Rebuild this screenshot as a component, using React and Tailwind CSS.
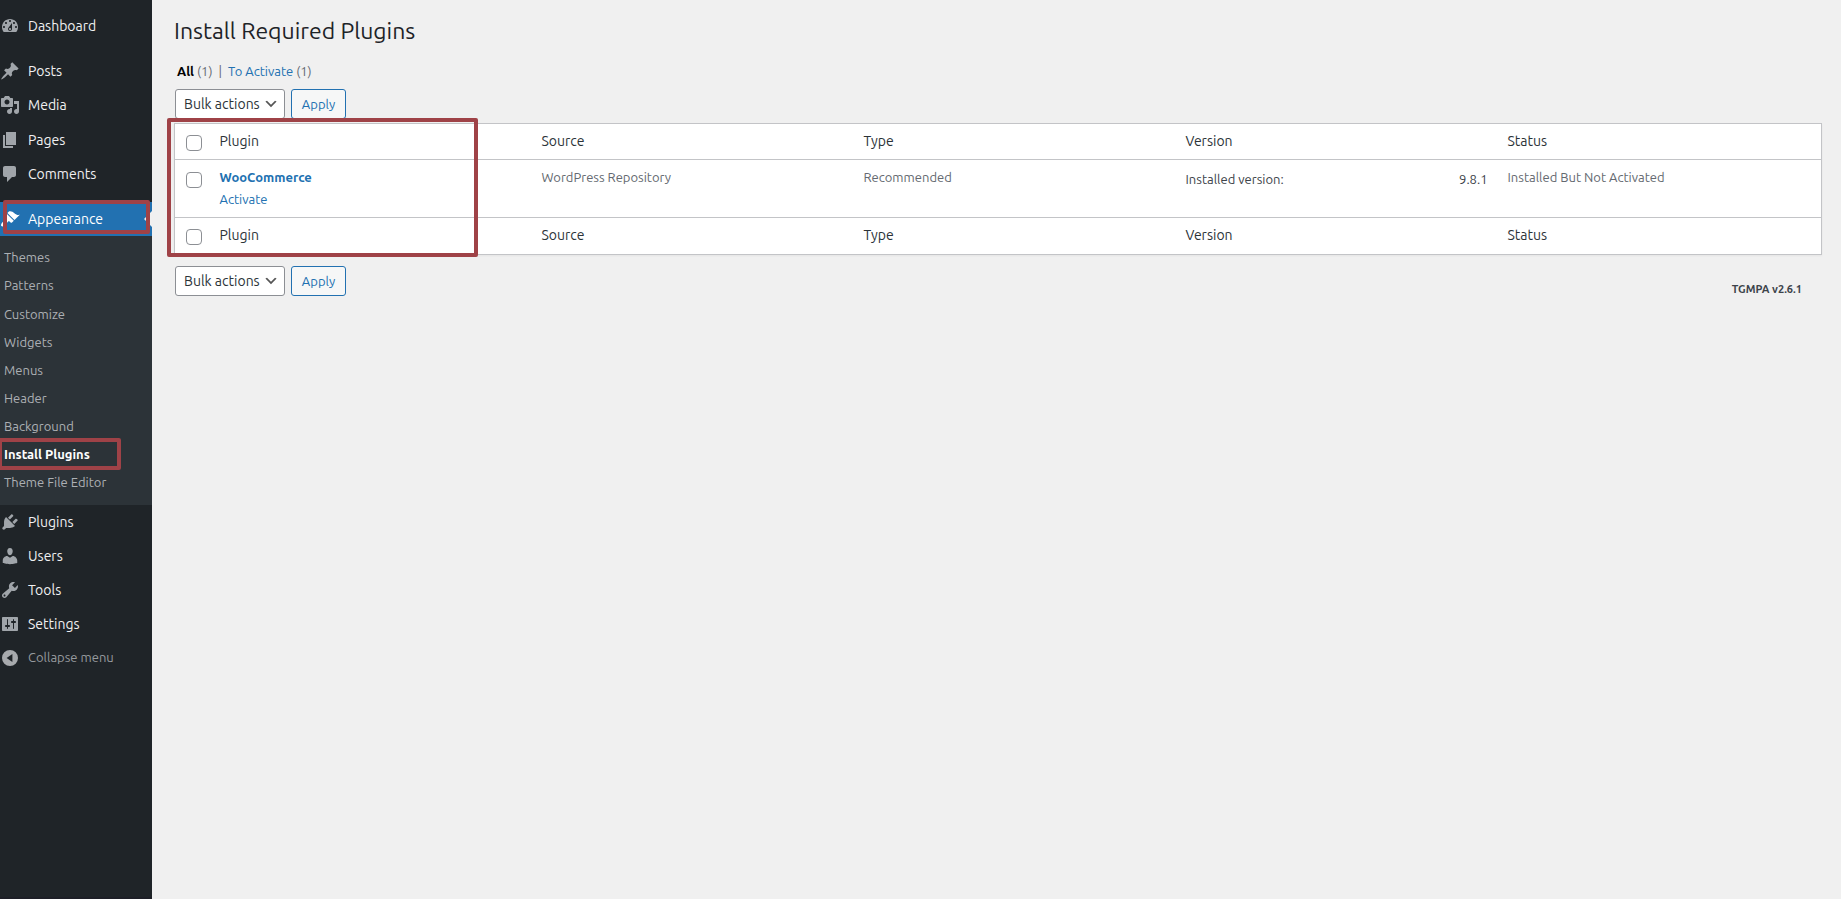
import React, { useState } from 'react';

const icons = {
  dashboard: 'M3.76 16h12.48c1.1-1.37 1.76-3.11 1.76-5 0-4.42-3.58-8-8-8s-8 3.58-8 8c0 1.89.66 3.63 1.76 5zM10 4c.55 0 1 .45 1 1s-.45 1-1 1-1-.45-1-1 .45-1 1-1zM6 6c.55 0 1 .45 1 1s-.45 1-1 1-1-.45-1-1 .45-1 1-1zm8 0c.55 0 1 .45 1 1s-.45 1-1 1-1-.45-1-1 .45-1 1-1zm-5.37 5.55L12 7v6c0 1.1-.9 2-2 2s-2-.9-2-2c0-.57.24-1.08.63-1.45zM4 10c.55 0 1 .45 1 1s-.45 1-1 1-1-.45-1-1 .45-1 1-1zm12 0c.55 0 1 .45 1 1s-.45 1-1 1-1-.45-1-1 .45-1 1-1zm-5 3c0-.55-.45-1-1-1s-1 .45-1 1 .45 1 1 1 1-.45 1-1z',
  posts: 'M10.44 3.02l1.82-1.82 6.36 6.35-1.83 1.82c-1.05-.68-2.48-.57-3.41.36l-.75.75c-.92.93-1.04 2.35-.35 3.41l-1.83 1.82-2.41-2.41-2.8 2.79c-.42.42-3.38 2.71-3.8 2.29s1.86-3.39 2.28-3.81l2.79-2.79L4.1 9.36l1.83-1.82c1.05.69 2.48.57 3.4-.36l.75-.75c.93-.92 1.05-2.35.36-3.41z',
  media: 'M13 11V4c0-.55-.45-1-1-1h-1.67L9 1H5L3.67 3H2c-.55 0-1 .45-1 1v7c0 .55.45 1 1 1h10c.55 0 1-.45 1-1zM7 4.5c1.38 0 2.5 1.12 2.5 2.5S8.38 9.5 7 9.5 4.5 8.38 4.5 7 5.62 4.5 7 4.5zM14 6h5v10.5c0 1.38-1.12 2.5-2.5 2.5S14 17.88 14 16.5s1.12-2.5 2.5-2.5c.17 0 .34.02.5.05V9h-3V6zm-4 8.05V13h2v3.5c0 1.38-1.12 2.5-2.5 2.5S7 17.88 7 16.5 8.12 14 9.5 14c.17 0 .34.02.5.05z',
  pages: 'M6 15V2h10v13H6zm-1 1h8v2H3V5h2v11z',
  comments: 'M5 2h9c1.1 0 2 .9 2 2v7c0 1.1-.9 2-2 2h-2l-5 5v-5H5c-1.1 0-2-.9-2-2V4c0-1.1.9-2 2-2z',
  appearance: 'M14.48 11.06L7.41 3.99l1.5-1.5c.5-.56 2.3-.47 3.51.32 1.21.8 1.43 1.28 2.91 2.1 1.18.64 2.45 1.26 4.45.85zm-.71.71L6.7 4.7 4.93 6.47c-.39.39-.39 1.02 0 1.41l1.06 1.06c.39.39.39 1.03 0 1.42-.6.6-1.43 1.11-2.21 1.69-.35.26-.7.53-1.01.84C1.43 14.23.4 16.08 1.4 17.07c.99 1 2.84-.03 4.18-1.36.31-.31.58-.66.85-1.02.57-.78 1.08-1.61 1.69-2.21.39-.39 1.02-.39 1.41 0l1.06 1.06c.39.39 1.02.39 1.41 0z',
  plugins: 'M13.11 4.36L9.87 7.6 8 5.73l3.24-3.24c.35-.34 1.05-.2 1.56.32.52.51.66 1.21.31 1.55zm-8 1.77l.91-1.12 9.01 9.01-1.19.84c-.71.71-2.63 1.16-3.82 1.16H6.14L4.9 17.26c-.59.59-1.54.59-2.12 0-.59-.58-.59-1.53 0-2.12l1.24-1.24v-3.88c0-1.13.4-3.19 1.09-3.89zm7.26 3.97l3.24-3.24c.34-.35 1.04-.21 1.55.31.52.51.66 1.21.31 1.55l-3.24 3.25z',
  users: 'M10 9.25c-2.27 0-2.73-3.44-2.73-3.44C7 4.02 7.82 2 9.97 2c2.16 0 2.98 2.02 2.71 3.81 0 0-.41 3.44-2.68 3.44zm0 2.57L12.72 10c2.39 0 4.52 2.33 4.52 4.53v2.49s-3.65 1.13-7.24 1.13c-3.65 0-7.24-1.13-7.24-1.13v-2.49c0-2.25 1.94-4.48 4.47-4.48z',
  tools: 'M16.68 9.77c-1.34 1.34-3.3 1.67-4.95.99l-5.41 6.52c-.99.99-2.59.99-3.58 0s-.99-2.59 0-3.57l6.52-5.42c-.68-1.65-.35-3.61.99-4.95 1.28-1.28 3.12-1.62 4.72-1.06l-2.89 2.89 2.82 2.82 2.86-2.87c.53 1.58.18 3.39-1.08 4.65zM3.81 16.21c.4.39 1.04.39 1.43 0 .4-.4.4-1.04 0-1.43-.39-.4-1.03-.4-1.43 0-.39.39-.39 1.03 0 1.43z',
  settings: 'M18 16V4c0-.55-.45-1-1-1H3c-.55 0-1 .45-1 1v12c0 .55.45 1 1 1h14c.55 0 1-.45 1-1zM8 11h1c.55 0 1 .45 1 1s-.45 1-1 1H8v1.5c0 .28-.22.5-.5.5s-.5-.22-.5-.5V13H6c-.55 0-1-.45-1-1s.45-1 1-1h1V5.5c0-.28.22-.5.5-.5s.5.22.5.5V11zm5-2h-1c-.55 0-1-.45-1-1s.45-1 1-1h1V5.5c0-.28.22-.5.5-.5s.5.22.5.5V7h1c.55 0 1 .45 1 1s-.45 1-1 1h-1v5.5c0 .28-.22.5-.5.5s-.5-.22-.5-.5V9z',
  collapse: 'M10 2a8 8 0 1 0 0 16 8 8 0 0 0 0-16zM12.4 6v8L6.6 10z',
};

const topMenu = [
  { name: 'Posts', icon: 'posts' },
  { name: 'Media', icon: 'media' },
  { name: 'Pages', icon: 'pages' },
  { name: 'Comments', icon: 'comments' },
];

const bottomMenu = [
  { name: 'Plugins', icon: 'plugins' },
  { name: 'Users', icon: 'users' },
  { name: 'Tools', icon: 'tools' },
  { name: 'Settings', icon: 'settings' },
];

const submenu = [
  'Themes',
  'Patterns',
  'Customize',
  'Widgets',
  'Menus',
  'Header',
  'Background',
  'Install Plugins',
  'Theme File Editor',
];

const columns = ['Plugin', 'Source', 'Type', 'Version', 'Status'];

const Icon = ({ name, className }) => (
  <svg viewBox="0 0 20 20" className={`h-5 w-5 shrink-0 ${className}`} fill="currentColor" fillRule="evenodd" aria-hidden="true">
    <path d={icons[name]} />
  </svg>
);

// Red frame laid over a highlighted area
const Highlight = ({ className }) => (
  <span className={`pointer-events-none absolute z-10 rounded-xs border-4 border-[#9f4247] ${className}`} />
);

const MenuItem = ({ item }) => (
  <li>
    <a href="#" className="flex h-[34px] items-center gap-2 text-sm text-[#f0f0f1]">
      <Icon name={item.icon} className="text-[#a0a5aa]" />
      {item.name}
    </a>
  </li>
);

const Sidebar = () => (
  <nav className="w-[152px] shrink-0 border-b-2 border-[#1d1f27] bg-[#1f2428] pt-[9px]">
    <ul>
      <MenuItem item={{ name: 'Dashboard', icon: 'dashboard' }} />
    </ul>
    <ul className="mt-[11px] flex h-[137px] flex-col justify-between">
      {topMenu.map((item) => (
        <MenuItem key={item.name} item={item} />
      ))}
    </ul>
    <div className="relative mt-[11px]">
      <a href="#" className="flex h-[34px] items-center gap-2 bg-[#2271b1] text-sm text-white">
        <Icon name="appearance" className="text-white" />
        Appearance
      </a>
      <span className="absolute top-[9px] right-0 border-8 border-l-0 border-transparent border-r-[#f0f0f0]" />
      <Highlight className="-top-0.5 right-0.5 bottom-0.5 left-[3px]" />
    </div>
    <ul className="flex h-[269px] flex-col justify-between bg-[#2c3338] py-2">
      {submenu.map((name) => {
        const current = name === 'Install Plugins';
        return (
          <li key={name} className="relative">
            <a
              href="#"
              className={`flex h-7 items-center pl-1 text-[13px] ${current ? 'font-bold text-white' : 'text-[#acb0b4]'}`}
            >
              {name}
            </a>
            {current && <Highlight className="-top-[3px] right-[31px] -bottom-px -left-0.5" />}
          </li>
        );
      })}
    </ul>
    <ul>
      {bottomMenu.map((item) => (
        <MenuItem key={item.name} item={item} />
      ))}
    </ul>
    <button type="button" className="flex h-[34px] items-center gap-2 text-[13px] text-[#969a9e]">
      <Icon name="collapse" className="text-[#a7aaad]" />
      Collapse menu
    </button>
  </nav>
);

const BulkActions = ({ id }) => (
  <div className="flex gap-1.5 pl-px">
    <div className="relative">
      <select
        id={id}
        aria-label="Select bulk action"
        className="h-[30px] w-[110px] appearance-none rounded-[3px] border border-[#8c8f94] bg-white pr-6 pl-2 text-sm text-[#2c3338]"
      >
        <option>Bulk actions</option>
        <option>Activate</option>
      </select>
      <svg viewBox="0 0 20 20" className="pointer-events-none absolute top-[7px] right-1.5 h-4 w-4" aria-hidden="true">
        <path d="M5 6l5 5 5-5 2 1-7 7-7-7 2-1z" fill="#555" />
      </svg>
    </div>
    <button
      type="button"
      className="h-[30px] w-[55px] rounded-[3px] border border-[#2271b1] bg-[#f6f7f7] pt-0.5 text-[13px] text-[#2271b1]"
    >
      Apply
    </button>
  </div>
);

const Checkbox = ({ label, checked, onChange }) => (
  <input
    type="checkbox"
    aria-label={label}
    checked={checked}
    onChange={(e) => onChange(e.target.checked)}
    className="block h-4 w-4 appearance-none rounded-sm border border-[#8c8f94] bg-white checked:bg-[#2271b1]"
  />
);

const HeadingRow = ({ className, checked, onChange }) => (
  <tr className={`align-top ${className}`}>
    <td className="w-[37px] pt-[11px] pl-[11px]">
      <Checkbox label="Select all" checked={checked} onChange={onChange} />
    </td>
    {columns.map((name) => (
      <th key={name} scope="col" className="px-2 pt-[7px] text-left text-sm font-normal text-[#2c3338]">
        {name}
      </th>
    ))}
  </tr>
);

const PluginTable = ({ selected, setSelected }) => (
  <div className="relative mt-1">
    <table className="w-full table-fixed border-collapse border border-[#c3c4c7] bg-white text-[13px] leading-5 text-[#646970] shadow-xs">
      <thead>
        <HeadingRow className="h-9" checked={selected} onChange={setSelected} />
      </thead>
      <tbody className="border-y border-[#c3c4c7]">
        <tr className="h-[58px] align-top">
          <td className="pt-3 pl-[11px]">
            <Checkbox label="Select WooCommerce" checked={selected} onChange={setSelected} />
          </td>
          <td className="px-2 pt-[7px]">
            <a href="#" className="block font-bold text-[#2271b1]">WooCommerce</a>
            <a href="#" className="mt-0.5 inline-block text-[#2271b1]">Activate</a>
          </td>
          <td className="px-2 pt-[7px]">WordPress Repository</td>
          <td className="px-2 pt-[7px]">Recommended</td>
          <td className="px-2 pt-[9px] text-[#3c434a]">
            <div className="flex justify-between pr-1">
              <span>Installed version:</span>
              <span>9.8.1</span>
            </div>
          </td>
          <td className="px-2 pt-[7px]">Installed But Not Activated</td>
        </tr>
      </tbody>
      <tfoot>
        <HeadingRow className="h-[37px]" checked={selected} onChange={setSelected} />
      </tfoot>
    </table>
    <Highlight className="-top-[5px] -bottom-[2px] -left-[7px] w-[311px]" />
  </div>
);

const App = () => {
  const [selected, setSelected] = useState(false);

  return (
    <div className="flex min-h-screen bg-[#f0f0f0] font-['Ubuntu','Roboto',sans-serif] text-[#3c434a]">
      <Sidebar />
      <main className="min-w-0 flex-1 pt-4 pr-[19px] pl-[22px]">
        <h1 className="text-[23px] leading-[30px] text-[#1d2327]">Install Required Plugins</h1>
        <div className="mt-4 mb-2 flex gap-1 pl-[3px] text-[13px] leading-[19px] text-[#646970]">
          <span>
            <a href="#" className="font-bold text-black">All</a> (1)
          </span>
          <span className="px-0.5">|</span>
          <span>
            <a href="#" className="text-[#2271b1]">To Activate</a> (1)
          </span>
        </div>
        <BulkActions id="bulk-top" />
        <PluginTable selected={selected} setSelected={setSelected} />
        <div className="mt-[11px] flex items-start justify-between">
          <BulkActions id="bulk-bottom" />
          <strong className="pt-[15px] pr-5 text-[11px] leading-4 font-bold">TGMPA v2.6.1</strong>
        </div>
      </main>
    </div>
  );
};

export default App;
